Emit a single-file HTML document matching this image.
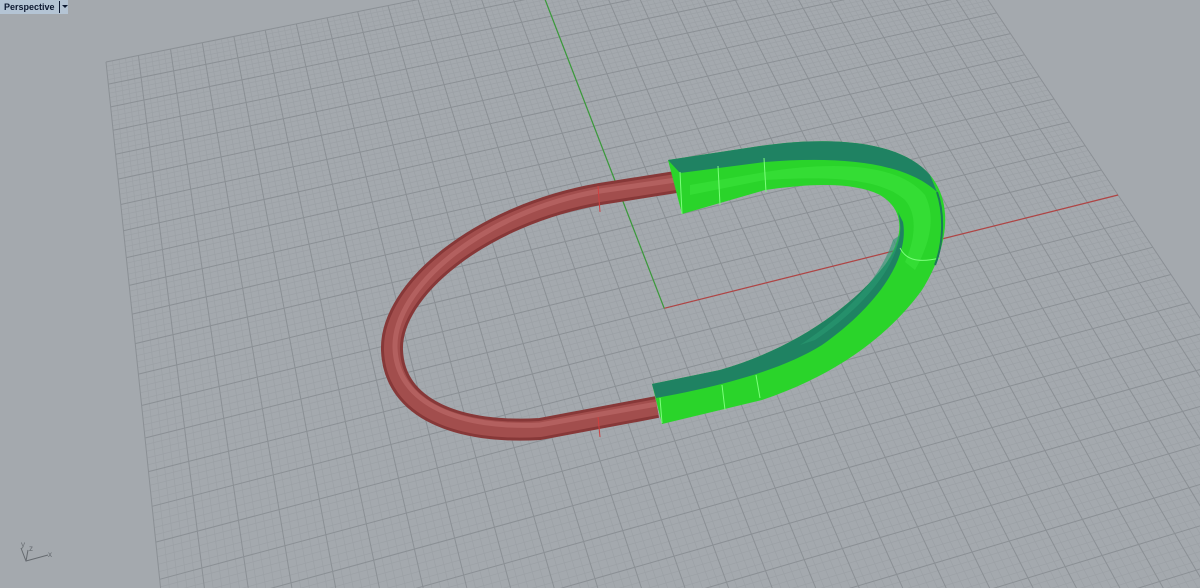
<!DOCTYPE html>
<html><head><meta charset="utf-8"><style>
html,body{margin:0;padding:0;width:1200px;height:588px;overflow:hidden;background:#a4a9ae;}
#lab{position:absolute;left:0;top:0;height:14px;width:68px;background:#b4c4d4;font:bold 9px "Liberation Sans",sans-serif;color:#0c1830;line-height:14px;padding-left:4px;box-sizing:border-box;white-space:nowrap;}
#lab span{position:absolute;left:59px;top:1px;height:12px;border-left:1px solid #0c1830;width:8px;}
#lab span:after{content:"";position:absolute;left:2px;top:4px;border-left:3px solid transparent;border-right:3px solid transparent;border-top:3px solid #0c1830;}
svg{position:absolute;left:0;top:0;}
</style></head><body>
<svg id="g" width="1200" height="588" viewBox="0 0 1200 588"></svg>
<svg width="1200" height="588" viewBox="0 0 1200 588">
<!-- red tube -->
<path d="M676,182 L600,194 C480,215 390,290 392,350 C394,410 460,434 540,429 L657,407" fill="none" stroke="#873838" stroke-width="22"/>
<path d="M676,182 L600,194 C480,215 390,290 392,350 C394,410 460,434 540,429 L657,407" fill="none" stroke="#a24e4d" stroke-width="16"/>
<path d="M676,180 L600,191 C482,212 393,288 395,348 C397,405 462,429 540,425 L657,404" fill="none" stroke="#bb6866" stroke-width="5" opacity="0.7"/>
<line x1="598" y1="186" x2="600" y2="212" stroke="#d04040" stroke-width="1"/>
<line x1="598" y1="417" x2="600" y2="437" stroke="#d04040" stroke-width="1"/>
<!-- green ring -->
<path fill-rule="evenodd" fill="#2ad42a" d="M668,160 L760,146 C830,136 900,140 930,175 C955,205 947,250 922,290 C882,345 822,380 762,400 L662,424 L652,384 L720,370 C790,350 850,310 885,265 C905,235 905,210 880,195 C850,180 800,185 765,190 L682,214 Z"/>
<path fill="#3ee63e" opacity="0.5" d="M690,185 L765,172 C840,160 900,165 925,195 C935,215 932,240 915,270 L905,262 C915,240 918,215 905,200 C880,178 830,176 765,180 L690,195 Z"/>
<path fill="#1f8262" d="M668,160 L760,146 C830,136 900,140 930,175 L937,192 C905,162 840,156 765,162 L680,173 Z"/>
<path fill="#1f8262" d="M903,222 C910,262 872,310 822,345 C782,370 722,386 656,398 L652,384 L720,370 C790,350 850,310 885,265 C900,245 903,232 898,212 Z"/>
<path fill="#2a9a72" opacity="0.6" d="M900,235 C895,270 860,310 815,340 L800,345 C845,315 880,280 893,240 Z"/>
<path d="M680,172 L682,214" stroke="#7cff7c" stroke-width="1" fill="none"/>
<path d="M718,166 L720,205 M764,158 L766,192" stroke="#7cff7c" stroke-width="1" fill="none"/>
<path d="M660,398 L662,423 M722,385 L725,410 M756,375 L760,398" stroke="#7cff7c" stroke-width="1" fill="none"/>
<path d="M900,248 C905,258 915,264 940,258" stroke="#7cff7c" stroke-width="1" fill="none"/>
<path d="M937,192 C945,215 943,245 935,265" stroke="#1c7a58" stroke-width="2" fill="none"/>
<!-- axis icon -->
<g stroke="#666b70" stroke-width="1" fill="none">
<path d="M21,548 L26,561 L48,555"/>
<path d="M26,561 L28,550"/>
</g>
<g font-family="Liberation Sans,sans-serif" font-size="8" fill="#666b70">
<text x="21" y="547">y</text><text x="29" y="551">z</text><text x="48" y="557">x</text>
</g>
</svg>
<div id="lab">Perspective<span></span></div>
<script>
(function(){
var src=[[-1,0],[1,0],[-1,1],[0,1]];
var dst=[[145,438],[1118,195],[106,62],[536,-24]];
var A=[],B=[];
for(var i=0;i<4;i++){var u=src[i][0],v=src[i][1],x=dst[i][0],y=dst[i][1];
A.push([u,v,1,0,0,0,-u*x,-v*x]);B.push(x);
A.push([0,0,0,u,v,1,-u*y,-v*y]);B.push(y);}
var n=8;
for(var c=0;c<n;c++){var p=c;for(var r=c+1;r<n;r++)if(Math.abs(A[r][c])>Math.abs(A[p][c]))p=r;
var t=A[c];A[c]=A[p];A[p]=t;t=B[c];B[c]=B[p];B[p]=t;
for(var r=0;r<n;r++){if(r==c)continue;var f=A[r][c]/A[c][c];for(var k=c;k<n;k++)A[r][k]-=f*A[c][k];B[r]-=f*B[c];}}
var h=[];for(var i=0;i<n;i++)h.push(B[i]/A[i][i]);
function P(u,v){var w=h[6]*u+h[7]*v+1;return [(h[0]*u+h[1]*v+h[2])/w,(h[3]*u+h[4]*v+h[5])/w,w];}
var vmin=-1;
while(vmin<0&&(P(-1,vmin)[2]<0.15||P(1,vmin)[2]<0.15))vmin+=0.01;
var N=14,S=5,M=N*S,out='';
function L(a,b,col,wd){out+='<line x1="'+a[0].toFixed(1)+'" y1="'+a[1].toFixed(1)+'" x2="'+b[0].toFixed(1)+'" y2="'+b[1].toFixed(1)+'" stroke="'+col+'" stroke-width="'+wd+'"/>';}
for(var pass=0;pass<2;pass++){
for(var i=-M;i<=M;i++){var mj=(i%S==0);if((pass==0)==mj)continue;
var q=i/M;var col=mj?'#8b9095':'#9ca1a6';var wd=mj?1:0.7;
L(P(q,vmin),P(q,1),col,wd);
if(q>=vmin)L(P(-1,q),P(1,q),col,wd);}
}
L(P(0,0),P(1,0),'#b04444',1.2);
L(P(0,0),P(0,1),'#3a9a3a',1.2);
document.getElementById('g').innerHTML=out;
})();
</script>
</body></html>
